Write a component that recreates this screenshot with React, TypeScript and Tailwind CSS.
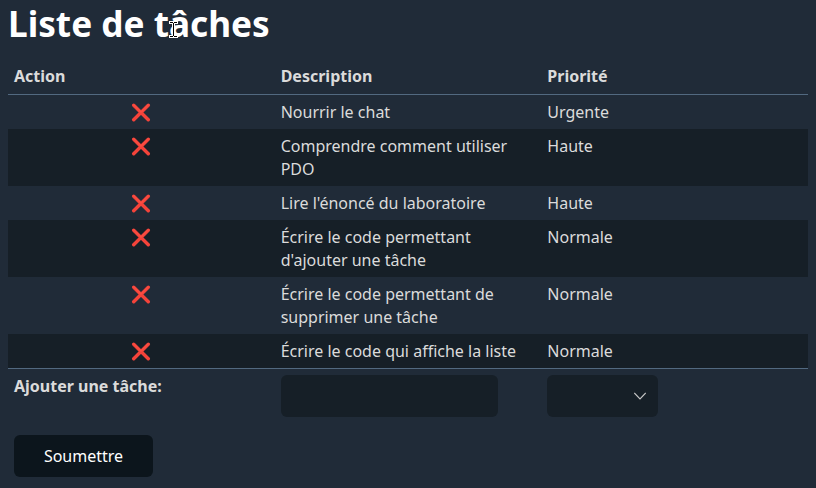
import React from "react";

const tasks = [
  { description: "Nourrir le chat", priority: "Urgente" },
  { description: "Comprendre comment utiliser PDO", priority: "Haute" },
  { description: "Lire l'énoncé du laboratoire", priority: "Haute" },
  { description: "Écrire le code permettant d'ajouter une tâche", priority: "Normale" },
  { description: "Écrire le code permettant de supprimer une tâche", priority: "Normale" },
  { description: "Écrire le code qui affiche la liste", priority: "Normale" },
];

function Cross() {
  return (
    <svg viewBox="0 0 20 20" className="mx-auto mt-[2px] block h-5 w-5" fill="none" strokeLinecap="round">
      <path d="M2.7 2.2 17.3 16.8M17.3 2.2 2.7 16.8" stroke="#f4433a" strokeWidth="3.4" />
      <path d="M2.6 1.8 10 9.2 17.4 1.8" stroke="#fa5044" strokeWidth="1.2" />
    </svg>
  );
}

function TextCursor() {
  return (
    <svg className="absolute top-[21px] left-[161px] h-[17px] w-[9px]" viewBox="0 0 9 17" fill="none">
      <path d="M0 1.5h9M0 15.5h9M4.5 1v15" stroke="#fff" strokeWidth="3" />
      <path d="M1 1.5h3M5 1.5h3M1 15.5h3M5 15.5h3M4.5 2v13" stroke="#000" />
    </svg>
  );
}

export default function App() {
  return (
    <main className="h-[488px] overflow-hidden bg-[#202b38] px-2 font-['Noto_Sans',sans-serif] text-base leading-[23px] text-[#dbdbdb]">
      <h1 className="relative mb-[12px] text-[35.2px] leading-[46px] font-bold text-white">
        Liste de tâches
        <TextCursor />
      </h1>
      <table className="w-full table-fixed border-collapse text-left">
        <thead>
          <tr className="border-b border-[#526980]">
            <th className="px-1.5 pt-[7px] pb-1.5">Action</th>
            <th className="px-1.5 pt-[7px] pb-1.5">Description</th>
            <th className="px-1.5 pt-[7px] pb-1.5">Priorité</th>
          </tr>
        </thead>
        <tbody>
          {tasks.map((task) => (
            <tr key={task.description} className="align-top even:bg-[#161f27]">
              <td className="px-1.5 pt-1.5 pb-[5px]"><Cross /></td>
              <td className="px-1.5 pt-1.5 pb-[5px]">{task.description}</td>
              <td className="px-1.5 pt-1.5 pb-[5px]">{task.priority}</td>
            </tr>
          ))}
        </tbody>
        <tfoot>
          <tr className="border-t border-[#526980] align-top">
            <th className="p-1.5">Ajouter une tâche:</th>
            <td className="p-1.5"><div className="h-[42px] w-[217px] rounded-md bg-[#161f27]" /></td>
            <td className="p-1.5">
              <div className="flex h-[42px] w-[111px] items-center justify-end rounded-md bg-[#161f27] pr-3">
                <svg viewBox="0 0 12 8" className="h-2 w-3" fill="none"><path d="m.3 1 5.7 6 5.7-6" stroke="#c8c8c8" strokeWidth="1.1" /></svg>
              </div>
            </td>
          </tr>
          <tr><td className="px-1.5 pt-3"><button className="h-[42px] w-[139px] rounded-md bg-[#0c151c] text-white">Soumettre</button></td></tr>
        </tfoot>
      </table>
    </main>
  );
}
